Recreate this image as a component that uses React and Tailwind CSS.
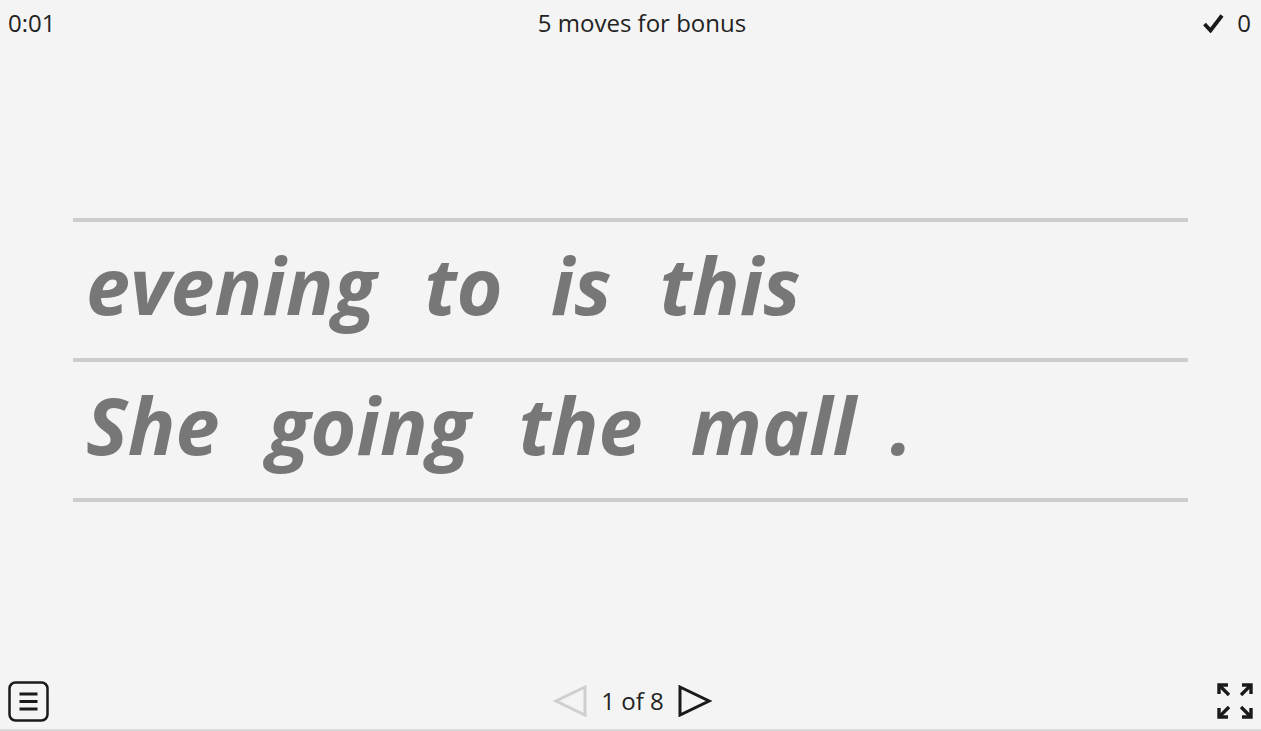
import React from "react";

const rows = [
  ["evening", "to", "is", "this"],
  ["She", "going", "the", "mall", "."],
];

function MenuIcon() {
  return (
    <svg width="41" height="41" viewBox="0 0 41 41">
      <rect x="1.5" y="1.5" width="38" height="38" rx="6" fill="none" stroke="#1a1a1a" strokeWidth="2.5" />
      <rect x="11.5" y="11.5" width="18" height="3" fill="#1a1a1a" />
      <rect x="11.5" y="19" width="18" height="3" fill="#1a1a1a" />
      <rect x="11.5" y="26.5" width="18" height="3" fill="#1a1a1a" />
    </svg>
  );
}

function Triangle({ color, left }) {
  return (
    <svg width="34" height="32" viewBox="0 0 34 32">
      <path
        d={left ? "M32 2 L3 16 L32 30 Z" : "M2 2 L31 16 L2 30 Z"}
        fill="none"
        stroke={color}
        strokeWidth="3"
      />
    </svg>
  );
}

function FullscreenIcon() {
  return (
    <svg width="38" height="38" viewBox="0 0 38 38" fill="none" stroke="#1a1a1a" strokeWidth="3.4">
      <path d="M3 12 V3 H12" />
      <path d="M3 3 L13 13" />
      <path d="M26 3 H35 V12" />
      <path d="M35 3 L25 13" />
      <path d="M3 26 V35 H12" />
      <path d="M3 35 L13 25" />
      <path d="M26 35 H35 V26" />
      <path d="M35 35 L25 25" />
    </svg>
  );
}

export default function App() {
  return (
    <div
      className="w-[1261px] h-[731px] bg-[#f4f4f4] flex flex-col border-b-2 border-[#d9d9d9] text-[#222]"
      style={{ fontFamily: '"Open Sans", "Noto Sans", sans-serif' }}
    >
      <div className="flex items-center justify-between h-[46px] px-2 text-[24px]">
        <span className="w-[120px]">0:01</span>
        <span className="pl-[23px]">5 moves for bonus</span>
        <span className="w-[120px] flex items-center justify-end gap-[13px] pr-[2px]">
          <svg width="21" height="19" viewBox="0 0 21 19">
            <path d="M1.5 10 L7.5 16.5 L19 1.5" fill="none" stroke="#1a1a1a" strokeWidth="3.8" />
          </svg>
          0
        </span>
      </div>

      <div className="flex-1 flex flex-col pt-[172px] px-[73px]">
        <div className="h-[4px] bg-[#cccccc]" />
        {rows.map((row, i) => (
          <div key={i}>
            <div className="h-[136px] flex items-end pb-[34px] pl-[13px] gap-[48px]">
              {row.map((w, j) => (
                <span
                  key={j}
                  className={`text-[79px] leading-none font-bold italic text-[#777777] ${
                    w === "." ? "-ml-[14px]" : ""
                  }`}
                >
                  {w}
                </span>
              ))}
            </div>
            <div className="h-[4px] bg-[#cccccc]" />
          </div>
        ))}
      </div>

      <div className="h-[62px] flex items-center justify-between pl-[8px] pr-[7px] pt-[6px]">
        <MenuIcon />
        <div className="flex items-center gap-[14px] text-[24px]">
          <Triangle color="#cfcfcf" left />
          <span>1 of 8</span>
          <Triangle color="#1a1a1a" />
        </div>
        <FullscreenIcon />
      </div>
    </div>
  );
}
